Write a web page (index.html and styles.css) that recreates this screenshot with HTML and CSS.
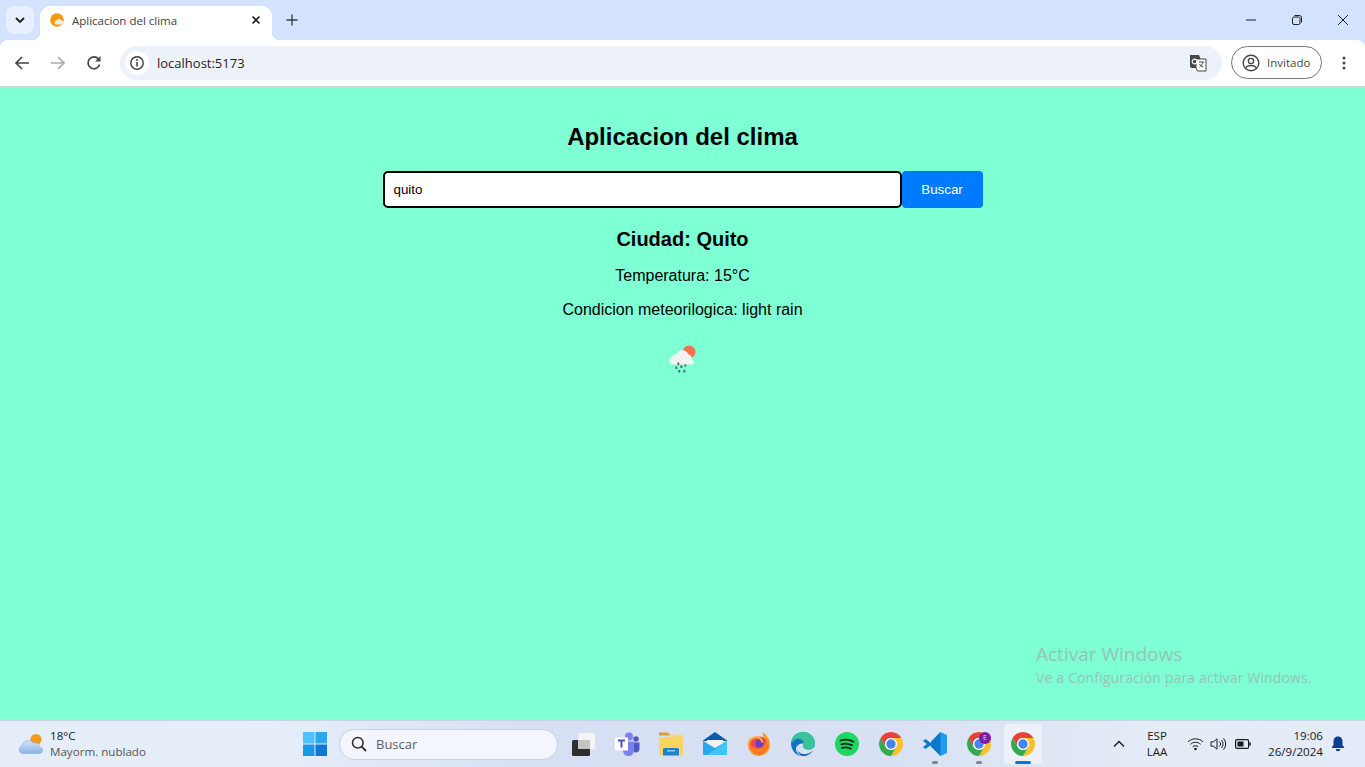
FILE: index.html
```html
<!DOCTYPE html>
<html lang="es">
<head>
    <meta charset="utf-8">
    <title>Aplicacion del clima</title>
    <link rel="stylesheet" href="styles.css">
</head>
<body>
    <svg class="icon-defs" width="0" height="0">
        <defs>
            <linearGradient id="cloud-fill" x1="0" y1="0" x2="0" y2="1">
                <stop offset="0" stop-color="#d3e3f8"/>
                <stop offset="1" stop-color="#8db4e6"/>
            </linearGradient>
        </defs>
        <symbol id="chrome" viewBox="0 0 24 24">
            <path fill="#ea4335" d="M22.39 6A12 12 0 0 0 1.61 6L6.8 15A6 6 0 0 1 12 6Z"/>
            <path fill="#fbc02d" d="M22.39 6H12A6 6 0 0 1 17.2 15L12 24A12 12 0 0 0 22.39 6Z"/>
            <path fill="#34a853" d="M1.61 6L6.8 15A6 6 0 0 0 17.2 15L12 24A12 12 0 0 1 1.61 6Z"/>
            <circle cx="12" cy="12" r="6" fill="#fff"/>
            <circle cx="12" cy="12" r="4.7" fill="#4285f4"/>
        </symbol>
    </svg>

    <header class="browser">
        <div class="tab-strip">
            <button class="tab-search">
                <svg width="12" height="12" viewBox="0 0 12 12"><path d="M2 4l4 4 4-4" fill="none" stroke="#1f1f1f" stroke-width="1.8"/></svg>
            </button>
            <div class="tab">
                <svg class="favicon" width="14" height="14" viewBox="0 0 14 14">
                    <circle cx="7" cy="7" r="6.8" fill="#f59a0c"/>
                    <path d="M6 11.5a2 2 0 0 1 .3-3.9 2.4 2.4 0 0 1 4.5-.3 2.1 2.1 0 0 1 2.6 2.4 6.8 6.8 0 0 1-1.6 1.8Z" fill="#f3efe6"/>
                </svg>
                <span class="tab-title">Aplicacion del clima</span>
                <svg class="tab-close" width="10" height="10" viewBox="0 0 10 10"><path d="M1.5 1.5l7 7m0-7l-7 7" stroke="#1f1f1f" stroke-width="1.6"/></svg>
            </div>
            <svg class="new-tab" width="12" height="12" viewBox="0 0 12 12"><path d="M6 .5v11M.5 6h11" stroke="#3c4043" stroke-width="1.4"/></svg>
            <div class="window-controls">
                <svg width="10" height="10" viewBox="0 0 10 10"><path d="M0 5h10" stroke="#1f1f1f"/></svg>
                <svg width="10" height="10" viewBox="0 0 10 10"><rect x=".5" y="2" width="7.5" height="7.5" rx="1.5" fill="none" stroke="#1f1f1f"/><path d="M2.5 .5h5a2 2 0 0 1 2 2v5" fill="none" stroke="#1f1f1f"/></svg>
                <svg width="10" height="10" viewBox="0 0 10 10"><path d="M0 0l10 10m0-10l-10 10" stroke="#1f1f1f"/></svg>
            </div>
        </div>
        <div class="toolbar">
            <svg class="nav-icon" width="16" height="16" viewBox="0 0 16 16"><path d="M15 8H2M8 2L2 8l6 6" fill="none" stroke="#474747" stroke-width="1.7"/></svg>
            <svg class="nav-icon" width="16" height="16" viewBox="0 0 16 16"><path d="M1 8h13M8 2l6 6-6 6" fill="none" stroke="#a9abad" stroke-width="1.7"/></svg>
            <svg class="nav-icon" width="16" height="16" viewBox="0 0 16 16"><path d="M13.6 9.5A5.9 5.9 0 1 1 12.4 4L14 5.5" fill="none" stroke="#474747" stroke-width="1.7"/><path d="M14.5 1v5.500H9z" fill="#474747"/></svg>
            <div class="omnibox">
                <span class="site-info">
                    <svg width="16" height="16" viewBox="0 0 16 16"><circle cx="8" cy="8" r="6.200" fill="none" stroke="#3c3c3c" stroke-width="1.400"/><path d="M8 7v4.500" stroke="#3c3c3c" stroke-width="1.500"/><circle cx="8" cy="5" r="1" fill="#3c3c3c"/></svg>
                </span>
                <span class="url">localhost:5173</span>
                <svg class="translate" width="18" height="18" viewBox="0 0 18 18">
                    <path d="M1 1h9l1.500 4v9H3a2 2 0 0 1-2-2Z" fill="#474747"/>
                    <path d="M7 5h10v12H8.500L7 14Z" fill="#fff" stroke="#474747"/>
                    <circle cx="5.500" cy="7.500" r="2.300" fill="none" stroke="#fff" stroke-width="1.200"/>
                    <path d="M10 8h5m-1 0c-.5 2-2 4-3.500 5m0-3c.8 1.300 2 2.500 3.500 3" fill="none" stroke="#474747"/>
                </svg>
            </div>
            <div class="profile">
                <svg width="18" height="18" viewBox="0 0 18 18"><circle cx="9" cy="9" r="7.800" fill="none" stroke="#474747" stroke-width="1.400"/><circle cx="9" cy="7" r="2.600" fill="none" stroke="#474747" stroke-width="1.400"/><path d="M3.800 14c1.300-3.400 9.100-3.400 10.400 0" fill="none" stroke="#474747" stroke-width="1.400"/></svg>
                <span>Invitado</span>
            </div>
            <svg class="menu-dots" width="4" height="14" viewBox="0 0 4 14"><circle cx="2" cy="2" r="1.500" fill="#474747"/><circle cx="2" cy="7" r="1.500" fill="#474747"/><circle cx="2" cy="12" r="1.500" fill="#474747"/></svg>
        </div>
    </header>

    <main class="page">
        <div class="app">
            <h1 class="app-title">Aplicacion del clima</h1>
            <form class="search-form">
                <input class="city-input" type="text" value="quito">
                <button class="search-btn" type="button">Buscar</button>
            </form>
            <div class="weather">
                <h2 class="weather-city">Ciudad: Quito</h2>
                <p>Temperatura: 15°C</p>
                <p>Condicion meteorilogica: light rain</p>
                <svg class="weather-icon" width="50" height="50" viewBox="0 0 50 50">
                    <circle cx="31" cy="17" r="6.500" fill="#f4714f"/>
                    <path d="M15 29.500a3.500 3.500 0 0 1-.8-6.900 4 4 0 0 1 4.300-3.400 6.300 6.300 0 0 1 11.700 0 4.800 4.800 0 0 1 3.600 5.200 3 3 0 0 1 1 5.100Z" fill="#f3f3f3"/>
                    <g fill="#4a5560">
                        <rect x="19.500" y="27.500" width="1.700" height="2.500"/>
                        <rect x="17.500" y="31.500" width="1.700" height="2.500"/>
                        <rect x="22.500" y="30.500" width="1.700" height="2.500"/>
                        <rect x="26.500" y="29.500" width="1.700" height="2"/>
                        <rect x="20.500" y="35" width="1.700" height="2.500"/>
                        <rect x="25.500" y="35" width="1.700" height="2.500"/>
                    </g>
                </svg>
            </div>
        </div>
        <div class="watermark">
            <div class="watermark-title">Activar Windows</div>
            <div class="watermark-text">Ve a Configuración para activar Windows.</div>
        </div>
    </main>

    <footer class="taskbar">
        <div class="task-weather">
            <svg width="26" height="22" viewBox="0 0 26 22">
                <circle cx="18" cy="6.500" r="5.500" fill="#f29a1f"/>
                <path d="M5 20.500a4 4 0 0 1-1-7.800A6.500 6.500 0 0 1 15.500 10a4.500 4.500 0 0 1 6 4 3.300 3.300 0 0 1 .5 6.500Z" fill="url(#cloud-fill)" stroke="#8db0e0" stroke-width=".6"/>
            </svg>
            <div class="task-weather-text">
                <span class="temp">18°C</span>
                <span class="cond">Mayorm. nublado</span>
            </div>
        </div>
        <div class="task-center">
            <div class="task-item">
                <svg width="24" height="24" viewBox="0 0 24 24">
                    <rect x="0" y="0" width="11.500" height="11.500" fill="#4cc2ff"/>
                    <rect x="12.500" y="0" width="11.500" height="11.500" fill="#2aa8ef"/>
                    <rect x="0" y="12.500" width="11.500" height="11.500" fill="#1a96e6"/>
                    <rect x="12.500" y="12.500" width="11.500" height="11.500" fill="#0a78d4"/>
                </svg>
            </div>
            <div class="task-search">
                <svg width="16" height="16" viewBox="0 0 16 16"><circle cx="6.800" cy="6.800" r="5.300" fill="none" stroke="#2b2b2b" stroke-width="1.500"/><path d="M10.700 10.700L15 15" stroke="#2b2b2b" stroke-width="1.800"/></svg>
                <span>Buscar</span>
            </div>
            <div class="task-item task-view">
                <svg width="24" height="24" viewBox="0 0 24 24">
                    <rect x="1" y="8" width="18" height="16" rx="1.500" fill="#2e2e2e"/>
                    <rect x="7" y="1" width="17" height="16" rx="1.500" fill="#f4f4f4"/>
                    <rect x="7" y="8" width="12" height="9" fill="#c4c4c4"/>
                </svg>
            </div>
            <div class="task-item">
                <svg width="26" height="24" viewBox="0 0 26 24">
                    <circle cx="15" cy="4.500" r="4" fill="#7b83eb"/>
                    <circle cx="22" cy="7" r="2.800" fill="#5059c9"/>
                    <path d="M18.500 10.500H25.500V17a3.500 3.500 0 0 1-6 2.500Z" fill="#5059c9"/>
                    <path d="M9 9.500H20V18.500a5.500 5.500 0 0 1-11 0Z" fill="#7b83eb"/>
                    <rect x="1" y="5.500" width="13" height="13" fill="#fff"/>
                    <path d="M4 8.500h7M7.500 8.500v7" stroke="#4b53bc" stroke-width="2"/>
                </svg>
            </div>
            <div class="task-item">
                <svg width="24" height="24" viewBox="0 0 24 24">
                    <path d="M0 1.500a1 1 0 0 1 1-1h8l2.500 3h-11.500Z" fill="#d9a31d"/>
                    <path d="M11 2.500H23a1 1 0 0 1 1 1V6H9Z" fill="#f0d98a"/>
                    <rect x="0" y="5" width="24" height="18.500" rx="1" fill="#fcd462"/>
                    <path d="M4 23.500v-6a1.500 1.500 0 0 1 1.500-1.500h13a1.500 1.500 0 0 1 1.500 1.500v6Z" fill="#1a86c9"/>
                    <rect x="8" y="18" width="8" height="1.500" fill="#8fd0f2"/>
                </svg>
            </div>
            <div class="task-item">
                <svg width="24" height="24" viewBox="0 0 24 24">
                    <path d="M0 8.500L12 0l12 8.500V9H0Z" fill="#0a5ea8"/>
                    <path d="M4 8h16v5l-8 4-8-4Z" fill="#f2f2f2"/>
                    <path d="M0 9l12 7 12-7v13a1 1 0 0 1-1 1H1a1 1 0 0 1-1-1Z" fill="#28a8ea"/>
                    <path d="M24 9v13a1 1 0 0 1-1 1H4Z" fill="#50d9ff" opacity=".6"/>
                </svg>
            </div>
            <div class="task-item">
                <svg width="24" height="24" viewBox="0 0 24 24">
                    <path d="M16 0c3 3 7 6 7 13a11 11 0 0 1-22 0c0-3 1-6 2.500-7.500L5 8c1-2 3-3.500 5-4-1 2 1 3 3 3 2 0 4 2 4 1 0-3-2-5-1-8Z" fill="#ff9a1f"/>
                    <circle cx="12" cy="13.500" r="9" fill="#f0445b"/>
                    <path d="M3 13.500a9 9 0 0 0 18 0c0-2-.5-3.500-1.500-5-1.500 3-4 8-8.500 8-3 0-5-1.500-8-3Z" fill="#ff7a1f"/>
                    <circle cx="12.500" cy="11.500" r="4.200" fill="#6b3fc0"/>
                    <path d="M3 8c3-3 6-3 8-2.500 3 .5 4.500 3.500 4 5" fill="none" stroke="#ffb11f" stroke-width="2"/>
                </svg>
            </div>
            <div class="task-item">
                <svg width="24" height="24" viewBox="0 0 24 24">
                    <path d="M12 0a12 12 0 0 1 12 11.500c0 4-3 6-6.500 6-3.500 0-5.500-1.800-5.500-3.500 0-1.700 1.200-2.500 1.200-2.500C8 11 5 14 5 17c0 3 2 6 6 7A12 12 0 0 1 0 12 12 12 0 0 1 12 0Z" fill="#1273c4"/>
                    <path d="M0 12C1 4 7 0 12 0a12 12 0 0 1 12 11.500c0 4-3 6-6.500 6s-5.500-1.800-5.500-3.500c0-1.700 1.200-2.500 1.200-2.500C11 5 4 5 0 12Z" fill="#37c49a"/>
                    <path d="M22 18c-2 4-6 6-10 6-1 0-5-2-5.500-6 1 3 5 5 9 4 3-.5 5-2 6.500-4Z" fill="#0c59a4"/>
                </svg>
            </div>
            <div class="task-item">
                <svg width="24" height="24" viewBox="0 0 24 24">
                    <circle cx="12" cy="12" r="12" fill="#1ed760"/>
                    <path d="M5.500 8.500c4.500-1.300 9-1 13 1.200M6.300 12.300c3.800-1 7.500-.8 10.800 1.100M7 15.800c3-.8 6-.6 8.800.9" fill="none" stroke="#12261a" stroke-width="1.800" stroke-linecap="round"/>
                </svg>
            </div>
            <div class="task-item"><svg width="24" height="24"><use href="#chrome"/></svg></div>
            <div class="task-item running">
                <svg width="24" height="24" viewBox="0 0 24 24">
                    <path d="M17.500 0L24 3v18l-6.500 3L7 13.500Z" fill="#1f9cf0"/>
                    <path d="M17.500 0v24L8 14.500V9.500Z" fill="#0a78c8"/>
                    <path d="M2.500 7L0 9l4 3-4 3 2.500 2 5-3.800L13 17.500V6.500L7.500 10.800Z" fill="#0a78c8"/>
                </svg>
            </div>
            <div class="task-item running">
                <svg width="24" height="24"><use href="#chrome"/></svg>
                <span class="profile-badge">E</span>
            </div>
            <div class="task-item active">
                <svg width="24" height="24"><use href="#chrome"/></svg>
            </div>
        </div>
        <div class="tray">
            <svg class="tray-chevron" width="12" height="8" viewBox="0 0 12 8"><path d="M1 6.500l5-5 5 5" fill="none" stroke="#1a1a1a" stroke-width="1.400"/></svg>
            <div class="tray-lang"><span>ESP</span><span>LAA</span></div>
            <svg class="tray-wifi" width="17" height="14" viewBox="0 0 17 14"><path d="M1 4.800c4.300-4 10.700-4 15 0M3.300 7.300c3-2.700 7.400-2.700 10.400 0M5.700 9.700c1.600-1.300 4-1.300 5.600 0" fill="none" stroke="#1a1a1a"/><circle cx="8.500" cy="12" r="1.300" fill="#1a1a1a"/></svg>
            <svg class="tray-vol" width="17" height="14" viewBox="0 0 17 14"><path d="M1 4.800h2.500L7 1.800v10.400L3.500 9.200H1Z" fill="none" stroke="#1a1a1a"/><path d="M9.500 4.500a3.500 3.500 0 0 1 0 5M11.500 3a6 6 0 0 1 0 8M13.500 1.300a8.500 8.500 0 0 1 0 11.400" fill="none" stroke="#1a1a1a"/></svg>
            <svg class="tray-batt" width="16" height="10" viewBox="0 0 16 10"><rect x=".6" y=".6" width="13" height="8.800" rx="1.500" fill="none" stroke="#1a1a1a" stroke-width="1.200"/><rect x="2.500" y="2.500" width="6" height="5" fill="#1a1a1a"/><rect x="14.300" y="3.500" width="1.500" height="3" fill="#1a1a1a"/></svg>
            <div class="tray-clock"><span>19:06</span><span>26/9/2024</span></div>
            <svg class="tray-bell" width="14" height="16" viewBox="0 0 14 16"><path d="M7 .5c3 0 4.500 2.300 4.500 5v3.500l2 3H.5l2-3V5.500C2.500 2.800 4 .5 7 .5Z" fill="#0a3f8f"/><path d="M4.800 13h4.400a2.200 2.200 0 0 1-4.400 0Z" fill="#0a3f8f"/></svg>
        </div>
    </footer>
</body>
</html>
```

FILE: styles.css
```css
* {
    margin: 0;
    padding: 0;
    box-sizing: border-box;
}

body {
    height: 100vh;
    overflow: hidden;
    display: flex;
    flex-direction: column;
    font-family: 'Liberation Sans', Arial, sans-serif;
}

svg {
    display: block;
    flex: none;
}

.icon-defs {
    position: absolute;
}

/* barra del navegador */
.browser {
    flex: none;
    height: 87px;
    background: #d3e3fd;
    font-family: 'Open Sans', 'Noto Sans', sans-serif;
}

.tab-strip {
    height: 40px;
    display: flex;
    align-items: flex-end;
    padding-left: 6px;
}

.tab-search {
    width: 28px;
    height: 28px;
    margin-bottom: 6px;
    border: none;
    border-radius: 8px;
    background: #e8f0fe;
    display: flex;
    align-items: center;
    justify-content: center;
}

.tab {
    position: relative;
    width: 232px;
    height: 34px;
    margin-left: 6px;
    padding: 0 10px 6px;
    background: #fff;
    border-radius: 10px 10px 0 0;
    display: flex;
    align-items: center;
}

.tab::before,
.tab::after {
    content: '';
    position: absolute;
    bottom: 0;
    width: 8px;
    height: 8px;
}

.tab::before {
    left: -8px;
    background: radial-gradient(circle at 0 0, transparent 8px, #fff 8.500px);
}

.tab::after {
    right: -8px;
    background: radial-gradient(circle at 100% 0, transparent 8px, #fff 8.500px);
}

.tab-title {
    flex: 1;
    margin-left: 8px;
    font-size: 11.500px;
    color: #3c4043;
}

.tab-close {
    margin-right: 1px;
}

.new-tab {
    margin: 0 0 14px 14px;
}

.window-controls {
    margin-left: auto;
    height: 40px;
    display: flex;
    align-items: center;
    gap: 36px;
    padding-right: 17px;
}

.toolbar {
    height: 47px;
    background: #fff;
    border-radius: 8px 8px 0 0;
    border-bottom: 1px solid #d5d9e0;
    display: flex;
    align-items: center;
    padding: 0 19px 0 14px;
}

.nav-icon {
    margin-right: 20px;
}

.omnibox {
    width: 1102px;
    height: 34px;
    margin-left: -2px;
    padding: 0 15px 0 5px;
    border-radius: 17px;
    background: #ecf1fa;
    display: flex;
    align-items: center;
}

.site-info {
    width: 24px;
    height: 24px;
    border-radius: 50%;
    background: #fff;
    display: flex;
    align-items: center;
    justify-content: center;
}

.url {
    flex: 1;
    margin-left: 8px;
    font-size: 13px;
    color: #1f1f1f;
}

.profile {
    width: 91px;
    height: 33px;
    margin-left: 9px;
    margin-bottom: 1px;
    border: 1px solid #747775;
    border-radius: 17px;
    display: flex;
    align-items: center;
    gap: 7px;
    padding-left: 10px;
    font-size: 11.500px;
    color: #474747;
}

.menu-dots {
    margin-left: 20px;
}

/* pagina */
.page {
    position: relative;
    flex: 1;
    background: #7fffd4;
}

.app {
    width: 600px;
    margin: 0 auto;
    padding-top: 36px;
    text-align: center;
    color: #000;
}

.app-title {
    font-size: 24px;
    line-height: 27px;
    margin-bottom: 21px;
}

.search-form {
    display: flex;
    height: 37px;
}

.city-input {
    flex: 1;
    padding: 0 9px;
    border: 2px solid #000;
    border-radius: 5px;
    font-family: 'Liberation Sans', Arial, sans-serif;
    font-size: 13.330px;
    color: #000;
    background: #fff;
    outline: none;
}

.search-btn {
    width: 81px;
    border: none;
    border-radius: 4px;
    background: #007bff;
    color: #fff;
    font-family: 'Liberation Sans', Arial, sans-serif;
    font-size: 13.330px;
}

.weather {
    margin-top: 20px;
}

.weather-city {
    font-size: 20px;
    line-height: 23px;
    margin-bottom: 16px;
}

.weather p {
    font-size: 16px;
    line-height: 18px;
    margin-bottom: 16px;
}

.weather-icon {
    margin: 1px auto 0;
}

.watermark {
    position: absolute;
    left: 1036px;
    top: 554px;
    font-family: 'Open Sans', 'Noto Sans', sans-serif;
    color: #93c4b4;
}

.watermark-title {
    font-size: 19px;
    line-height: 27px;
}

.watermark-text {
    font-size: 14px;
    line-height: 19px;
    letter-spacing: .15px;
}

/* barra de tareas */
.taskbar {
    flex: none;
    height: 47px;
    border-top: 1px solid #c9d3e3;
    background: linear-gradient(90deg, #e4edf8 0%, #e6eef9 20%, #d6dff3 40%, #d8e1f4 65%, #e4ecf6 85%, #e2ebf7 100%);
    display: flex;
    align-items: center;
    font-family: 'Open Sans', 'Noto Sans', sans-serif;
}

.task-weather {
    width: 293px;
    display: flex;
    align-items: center;
    gap: 6px;
    padding-left: 18px;
}

.task-weather-text {
    display: flex;
    flex-direction: column;
    font-size: 11.600px;
    line-height: 16px;
}

.temp {
    color: #1a1a1a;
}

.cond {
    color: #555;
}

.task-center {
    display: flex;
    align-items: center;
}

.task-item {
    position: relative;
    width: 44px;
    height: 40px;
    display: flex;
    align-items: center;
    justify-content: center;
}

.task-item.running::after,
.task-item.active::after {
    content: '';
    position: absolute;
    bottom: 0;
    left: 50%;
    width: 6px;
    height: 3px;
    margin-left: -3px;
    border-radius: 2px;
    background: #7d8590;
}

.task-item.active {
    width: 38px;
    margin: 0 3px;
    background: #edf1f9;
    border-radius: 4px;
    box-shadow: 0 0 0 1px #dfe5f1;
}

.task-item.active::after {
    width: 16px;
    margin-left: -8px;
    background: #0a78d4;
}

.task-view {
    margin-left: 3px;
}

.profile-badge {
    position: absolute;
    top: 8px;
    right: 10px;
    width: 12px;
    height: 12px;
    border-radius: 50%;
    background: #7b1fa2;
    color: #e8d5f0;
    font-size: 7px;
    line-height: 12px;
    text-align: center;
}

.task-search {
    width: 219px;
    height: 31px;
    margin-left: 2px;
    padding-left: 11px;
    border-radius: 16px;
    background: #f3f6fe;
    border: 1px solid #c8d2e6;
    display: flex;
    align-items: center;
    gap: 9px;
    font-size: 13px;
    color: #5f5f5f;
}

.tray {
    margin-left: auto;
    padding-right: 20px;
    display: flex;
    align-items: center;
    color: #1a1a1a;
    font-size: 11.500px;
}

.tray-lang {
    width: 30px;
    margin-left: 17px;
    display: flex;
    flex-direction: column;
    align-items: center;
    line-height: 16px;
}

.tray-wifi {
    margin-left: 15px;
}

.tray-vol {
    margin-left: 6px;
}

.tray-batt {
    margin-left: 8px;
}

.tray-clock {
    width: 64px;
    margin-left: 8px;
    display: flex;
    flex-direction: column;
    align-items: flex-end;
    font-size: 11.600px;
    line-height: 16px;
}

.tray-bell {
    margin-left: 8px;
}
```
